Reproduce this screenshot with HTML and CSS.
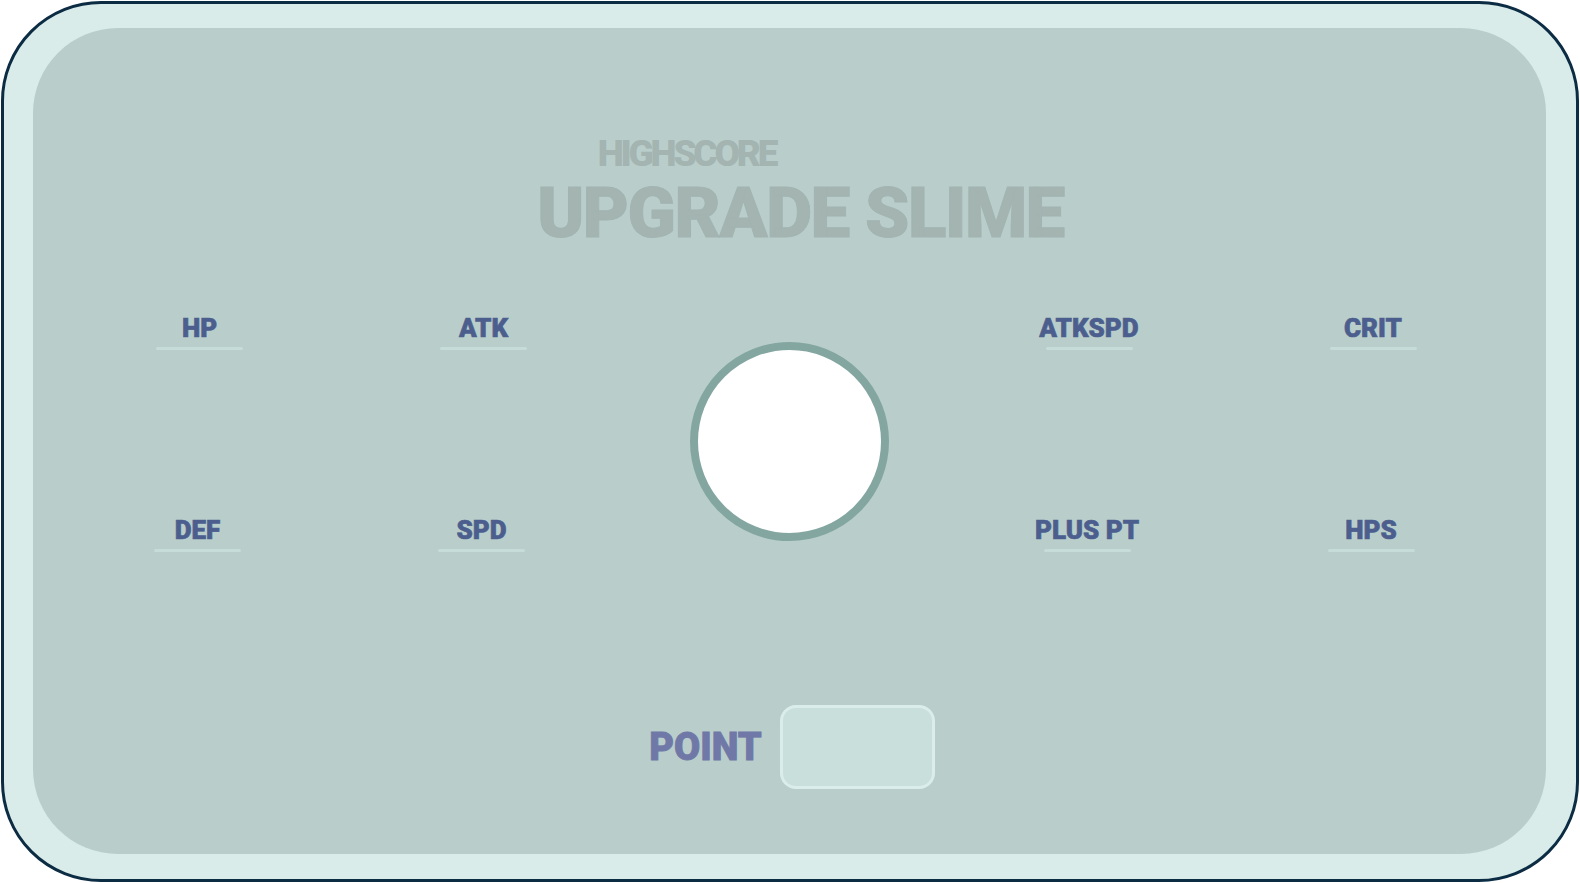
FILE: index.html
```html
<!DOCTYPE html>
<html lang="en">
<head>
    <meta charset="UTF-8">
    <meta name="viewport" content="width=device-width, initial-scale=1.0">
    <title>Upgrade Slime</title>
    <link rel="stylesheet" href="styles.css">
</head>
<body>
    <div class="frame">
        <div class="panel">
            <header class="titles">
                <div class="highscore">HIGHSCORE</div>
                <h1 class="title">UPGRADE SLIME</h1>
            </header>

            <div class="stats">
                <div class="stat"><span class="stat-name">HP</span><i class="stat-line"></i></div>
                <div class="stat"><span class="stat-name">ATK</span><i class="stat-line"></i></div>
                <div class="slime"></div>
                <div class="stat"><span class="stat-name">ATKSPD</span><i class="stat-line"></i></div>
                <div class="stat"><span class="stat-name">CRIT</span><i class="stat-line"></i></div>
                <div class="stat row-two"><span class="stat-name">DEF</span><i class="stat-line"></i></div>
                <div class="stat row-two"><span class="stat-name">SPD</span><i class="stat-line"></i></div>
                <div class="stat row-two"><span class="stat-name">PLUS PT</span><i class="stat-line"></i></div>
                <div class="stat row-two"><span class="stat-name">HPS</span><i class="stat-line"></i></div>
            </div>

            <div class="points">
                <span class="point-label">POINT</span>
                <div class="point-box"></div>
            </div>
        </div>
    </div>
</body>
</html>
```

FILE: styles.css
```css
html,
body {
    margin: 0;
    padding: 0;
    height: 883px;
}

body {
    background: #ffffff;
    font-family: Roboto, "DejaVu Sans", sans-serif;
    font-weight: 900;
}

.frame {
    margin: 1px;
    height: 881px;
    box-sizing: border-box;
    border: 3px solid #0c2c44;
    border-radius: 100px;
    background: #d9ecea;
    padding: 24px 30px 25px 29px;
    display: flex;
}

.panel {
    flex: 1;
    background: #b9cecb;
    border-radius: 85px;
    display: flex;
    flex-direction: column;
}

.titles {
    padding-top: 106px;
    display: flex;
    flex-direction: column;
    align-items: center;
}

.highscore {
    font-size: 37px;
    line-height: 40px;
    color: #a3b4b1;
    margin-right: 206px;
    letter-spacing: -3.2px;
}

.title {
    margin: 4px 0 0 22px;
    font-size: 71px;
    line-height: 70px;
    font-weight: 900;
    color: #a3b4b1;
    letter-spacing: -1.5px;
    -webkit-text-stroke: 1px #a3b4b1;
}

.stats {
    margin-top: 67px;
    display: grid;
    grid-template-columns: 284px 284px 328px 271px 297px;
    grid-template-rows: 202px auto;
    justify-content: center;
}

.stat {
    display: flex;
    flex-direction: column;
    align-items: center;
}

.row-two {
    margin-right: 4px;
}

.stat-name {
    font-size: 26px;
    line-height: 26px;
    color: #4b5e8e;
    -webkit-text-stroke: 0.6px #4b5e8e;
}

.stat-line {
    margin-top: 6px;
    width: 87px;
    height: 3px;
    border-radius: 2px;
    background: #c6dcd9;
}

.slime {
    grid-column: 3;
    grid-row: 1 / span 2;
    justify-self: center;
    margin-top: 27px;
    width: 199px;
    height: 199px;
    box-sizing: border-box;
    border: 8px solid #84a6a1;
    border-radius: 50%;
    background: #ffffff;
}

.points {
    margin-top: 153px;
    display: flex;
    align-items: center;
    justify-content: center;
    gap: 18px;
    padding-left: 5px;
}

.point-label {
    font-size: 38px;
    line-height: 38px;
    color: #6f78a6;
    -webkit-text-stroke: 0.8px #6f78a6;
}

.point-box {
    width: 155px;
    height: 84px;
    box-sizing: border-box;
    border: 3px solid #dbedeb;
    border-radius: 16px;
    background: #c9dfdc;
}
```
